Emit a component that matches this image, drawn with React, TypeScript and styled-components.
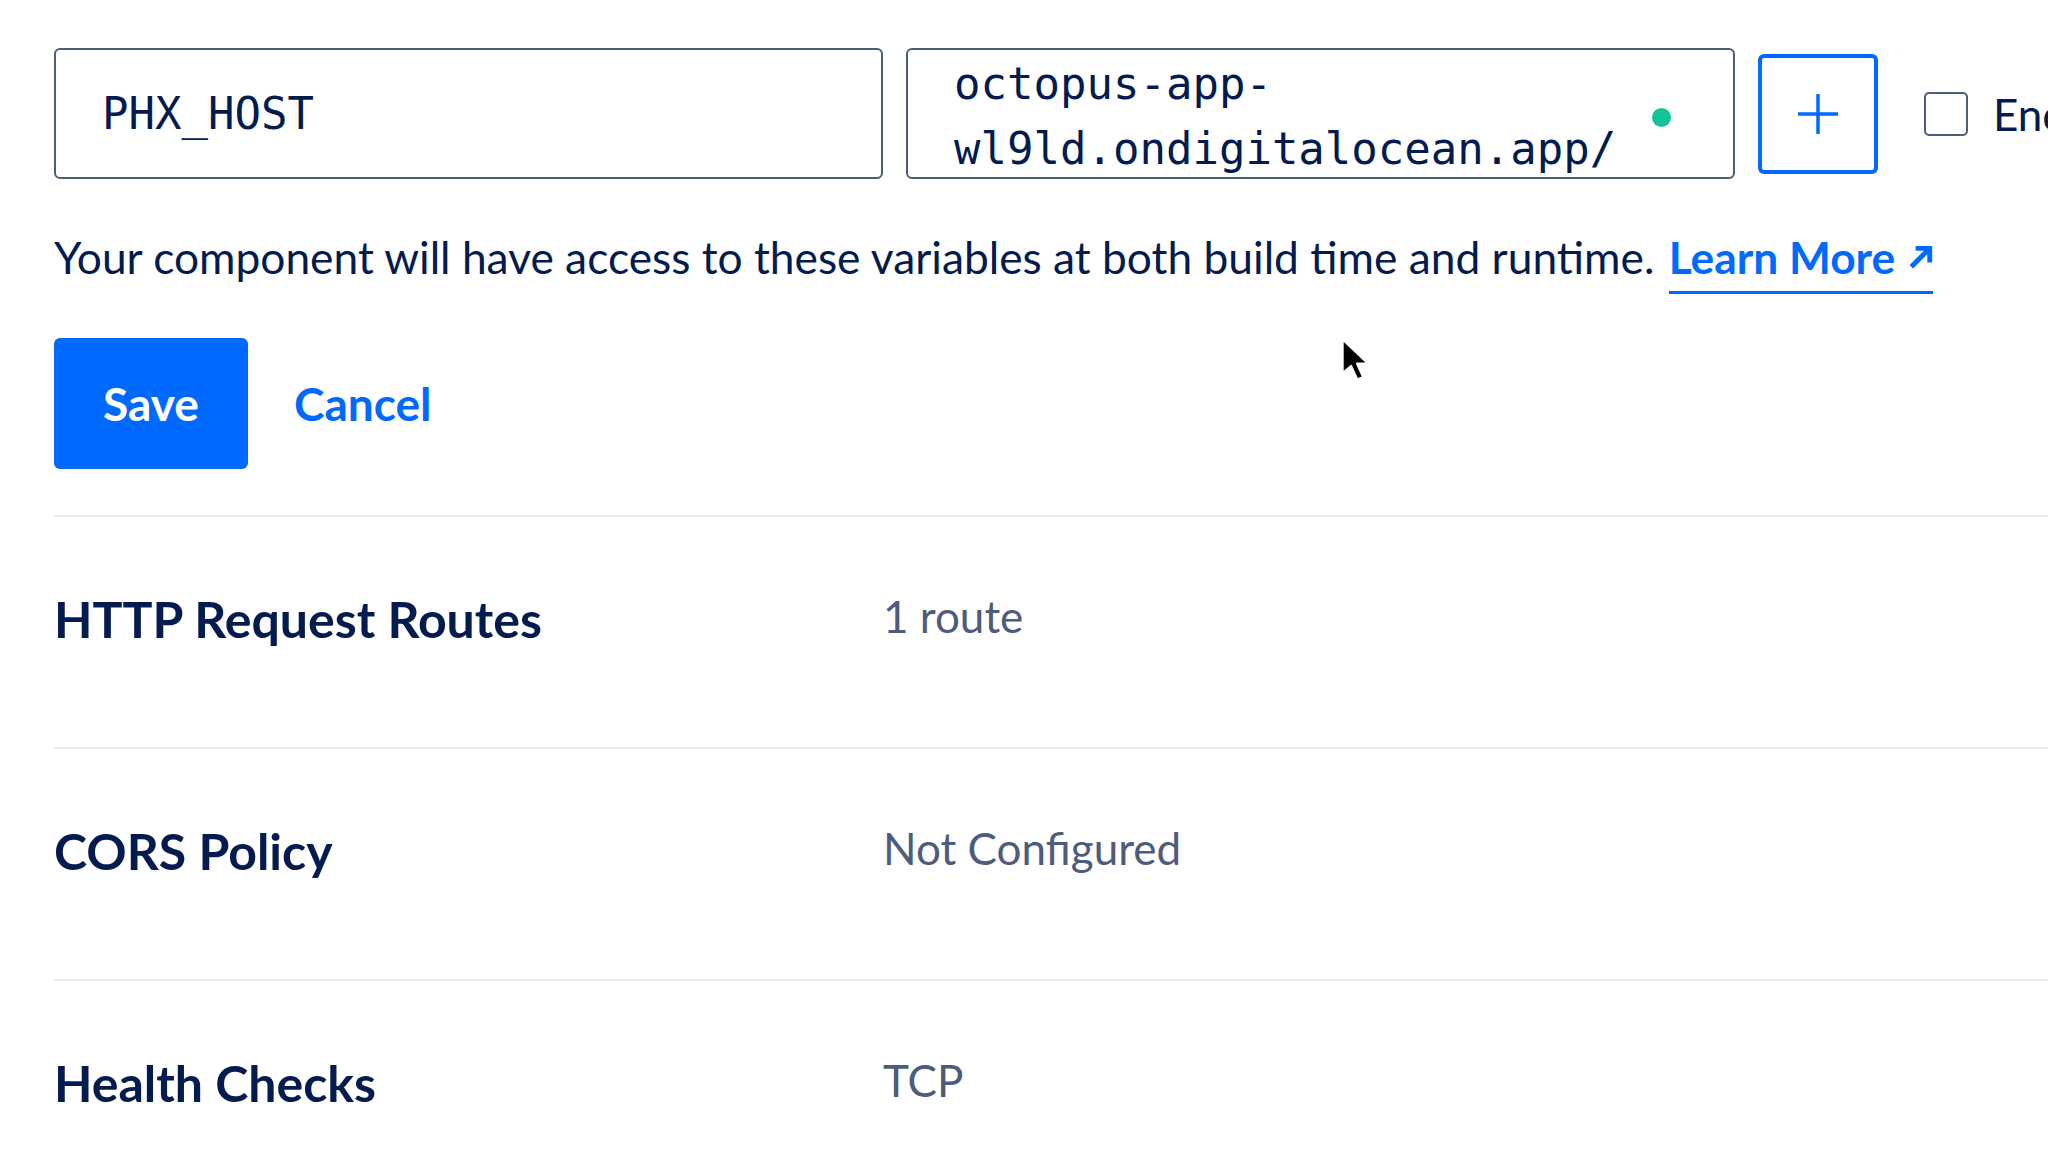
import React from 'react';
import styled, { createGlobalStyle } from 'styled-components';

const GlobalStyle = createGlobalStyle`
    html, body {
        margin: 0;
        padding: 0;
        background: #fff;
        overflow: hidden;
    }
    body {
        font-family: Lato, "Open Sans", sans-serif;
        color: #031b4e;
    }
`;

const Page = styled.div`
    position: relative;
    width: 2048px;
    height: 1152px;
    overflow: hidden;
    padding: 48px 0 0 54px;
    box-sizing: border-box;
`;

const InputRow = styled.div`
    display: flex;
    align-items: center;
    gap: 23px;
    height: 131px;
    white-space: nowrap;
`;

const Field = styled.div`
    position: relative;
    flex: 0 0 829px;
    height: 131px;
    box-sizing: border-box;
    border: 2px solid #4d5b7c;
    border-radius: 6px;
    padding: 0 46px;
    font-family: "DejaVu Sans Mono", "Liberation Mono", monospace;
    font-size: 44px;
    color: #031b4e;
    display: flex;
    align-items: center;
    overflow: hidden;
`;

const WrappedValue = styled.div`
    align-self: flex-start;
    line-height: 65px;
    margin-top: 1px;
    white-space: pre;
`;

const StatusDot = styled.span`
    position: absolute;
    left: 744px;
    top: 58px;
    width: 19px;
    height: 19px;
    border-radius: 50%;
    background: #15c39a;
`;

const AddButton = styled.button`
    flex: 0 0 120px;
    height: 120px;
    box-sizing: border-box;
    border: 4px solid #0069ff;
    border-radius: 6px;
    background: #fff;
    display: flex;
    align-items: center;
    justify-content: center;
    padding: 0;
`;

const CheckLabel = styled.label`
    display: flex;
    align-items: center;
    gap: 25px;
    margin-left: 23px;
    font-size: 44px;
    color: #031b4e;
`;

const CheckBox = styled.span`
    width: 44px;
    height: 44px;
    box-sizing: border-box;
    border: 2px solid #4d5b7c;
    border-radius: 5px;
    flex: none;
`;

const Helper = styled.p`
    margin: 48px 0 0;
    font-size: 44.3px;
    line-height: 60px;
    color: #031b4e;
    white-space: nowrap;
`;

const LearnMore = styled.a`
    color: #0069ff;
    font-weight: 700;
    text-decoration: none;
    border-bottom: 3px solid #0069ff;
    padding-bottom: 4px;
    margin-left: 3px;
    display: inline-flex;
    align-items: center;
    gap: 12px;
`;

const Actions = styled.div`
    display: flex;
    align-items: center;
    gap: 46px;
    margin-top: 44px;
`;

const SaveButton = styled.button`
    width: 194px;
    height: 131px;
    border: none;
    border-radius: 6px;
    background: #0069ff;
    color: #fff;
    font-family: Lato, sans-serif;
    font-weight: 700;
    font-size: 46px;
`;

const CancelButton = styled.button`
    border: none;
    background: none;
    padding: 0;
    color: #0069ff;
    font-family: Lato, sans-serif;
    font-weight: 700;
    font-size: 46px;
`;

const Sections = styled.div`
    margin-top: 46px;
`;

const Section = styled.div`
    display: grid;
    grid-template-columns: 829px 1fr;
    height: 232px;
    box-sizing: border-box;
    border-top: 2px solid #e5e8ed;
    padding-top: 72px;
`;

const SectionTitle = styled.div`
    font-size: 50px;
    font-weight: 700;
    line-height: 60px;
    color: #031b4e;
`;

const SectionValue = styled.div`
    font-size: 44px;
    line-height: 54px;
    color: #4d5b7c;
`;

const Cursor = styled.svg`
    position: absolute;
    left: 1340px;
    top: 336px;
`;

const sections = [
    { title: 'HTTP Request Routes', value: '1 route' },
    { title: 'CORS Policy', value: 'Not Configured' },
    { title: 'Health Checks', value: 'TCP' },
];

const App = () => {
    return (
        <>
            <GlobalStyle />
            <Page>
                <InputRow>
                    <Field>PHX_HOST</Field>
                    <Field>
                        <WrappedValue>{'octopus-app-\nwl9ld.ondigitalocean.app/'}</WrappedValue>
                        <StatusDot />
                    </Field>
                    <AddButton>
                        <svg width="40" height="40" viewBox="0 0 40 40">
                            <path d="M20 1v38M1 20h38" stroke="#0069ff" strokeWidth="3.5" strokeLinecap="round" />
                        </svg>
                    </AddButton>
                    <CheckLabel>
                        <CheckBox />
                        Encrypt
                    </CheckLabel>
                </InputRow>

                <Helper>
                    Your component will have access to these variables at both build time and runtime.{' '}
                    <LearnMore>
                        Learn More
                        <svg width="26" height="26" viewBox="0 0 24 24">
                            <path d="M4 21L19 6M8 4h13v13" stroke="#0069ff" strokeWidth="4.5" fill="none" />
                        </svg>
                    </LearnMore>
                </Helper>

                <Actions>
                    <SaveButton>Save</SaveButton>
                    <CancelButton>Cancel</CancelButton>
                </Actions>

                <Sections>
                    {sections.map((s) => (
                        <Section key={s.title}>
                            <SectionTitle>{s.title}</SectionTitle>
                            <SectionValue>{s.value}</SectionValue>
                        </Section>
                    ))}
                </Sections>

                <Cursor width="32" height="48" viewBox="0 0 26 38">
                    <path d="M2 2v28l7-6 5 11 5-2-5-11h9z" fill="#000" stroke="#fff" strokeWidth="2" strokeLinejoin="round" />
                </Cursor>
            </Page>
        </>
    );
};

export default App;
